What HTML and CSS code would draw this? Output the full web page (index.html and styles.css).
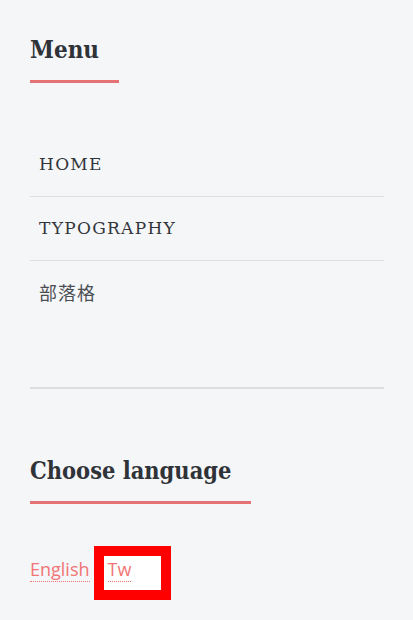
FILE: index.html
```html
<!DOCTYPE html>
<html lang="en">
<head>
<meta charset="utf-8">
<title>Sidebar</title>
<link rel="stylesheet" href="styles.css">
</head>
<body>
<aside class="sidebar">
  <section class="widget widget-menu">
    <h2 class="widget-title title-menu">Menu</h2>
    <ul class="menu">
      <li class="menu-item"><a href="#">HOME</a></li>
      <li class="menu-item"><a href="#">TYPOGRAPHY</a></li>
      <li class="menu-item menu-item-cjk"><a href="#">部落格</a></li>
    </ul>
  </section>
  <hr class="divider">
  <section class="widget widget-lang">
    <h2 class="widget-title title-lang">Choose language</h2>
    <ul class="langs">
      <li class="lang"><a href="#">English</a></li>
      <li class="lang lang-current"><a href="#">Tw</a></li>
    </ul>
  </section>
</aside>
</body>
</html>
```

FILE: styles.css
```css
html, body {
  margin: 0;
  padding: 0;
  background: #f5f6f8;
}
body {
  font-family: "DejaVu Serif", serif;
  color: #2f3338;
}
.sidebar {
  padding: 0 29px 0 30px;
}
.widget-title {
  display: inline-block;
  margin: 0;
  padding: 0 20px 15px 0;
  border-bottom: 3px solid #e57373;
  font-family: "DejaVu Serif Condensed", "DejaVu Serif", serif;
  font-stretch: condensed;
  font-weight: bold;
  line-height: 30px;
  color: #2f3338;
}
.title-menu {
  margin-top: 35px;
  font-size: 24px;
}
.menu {
  list-style: none;
  margin: 50px 0 0;
  padding: 0;
}
.menu-item {
  padding: 20px 9px;
  line-height: 23px;
  font-size: 17px;
  letter-spacing: 1.3px;
  border-bottom: 1px solid #dcdde0;
}
.menu-item:last-child {
  border-bottom: none;
}
.menu-item a {
  color: #32363b;
  text-decoration: none;
}
.menu-item-cjk a {
  font-family: "Noto Sans CJK TC", "Noto Sans CJK SC", sans-serif;
  font-size: 18px;
  letter-spacing: 1px;
  color: #4a4e53;
}
.divider {
  margin: 61px 0 0;
  border: none;
  border-top: 2px solid #dcdde0;
  height: 0;
}
.widget-lang {
  padding-top: 1px;
}
.title-lang {
  margin-top: 66px;
  font-size: 23.4px;
}
.langs {
  list-style: none;
  margin: 42px 0 0;
  padding: 0;
  display: flex;
  align-items: flex-start;
  font-family: "Open Sans", sans-serif;
  font-size: 18px;
}
.lang {
  padding-top: 11px;
}
.lang a {
  color: #f07575;
  text-decoration: none;
  border-bottom: 1px dotted #f07575;
  line-height: 24px;
}
.lang-current {
  margin-left: 4px;
  width: 53px;
  height: 33px;
  padding: 1px 0 0 4px;
  box-sizing: content-box;
  background: #ffffff;
  border: 10px solid #ff0000;
}
```
